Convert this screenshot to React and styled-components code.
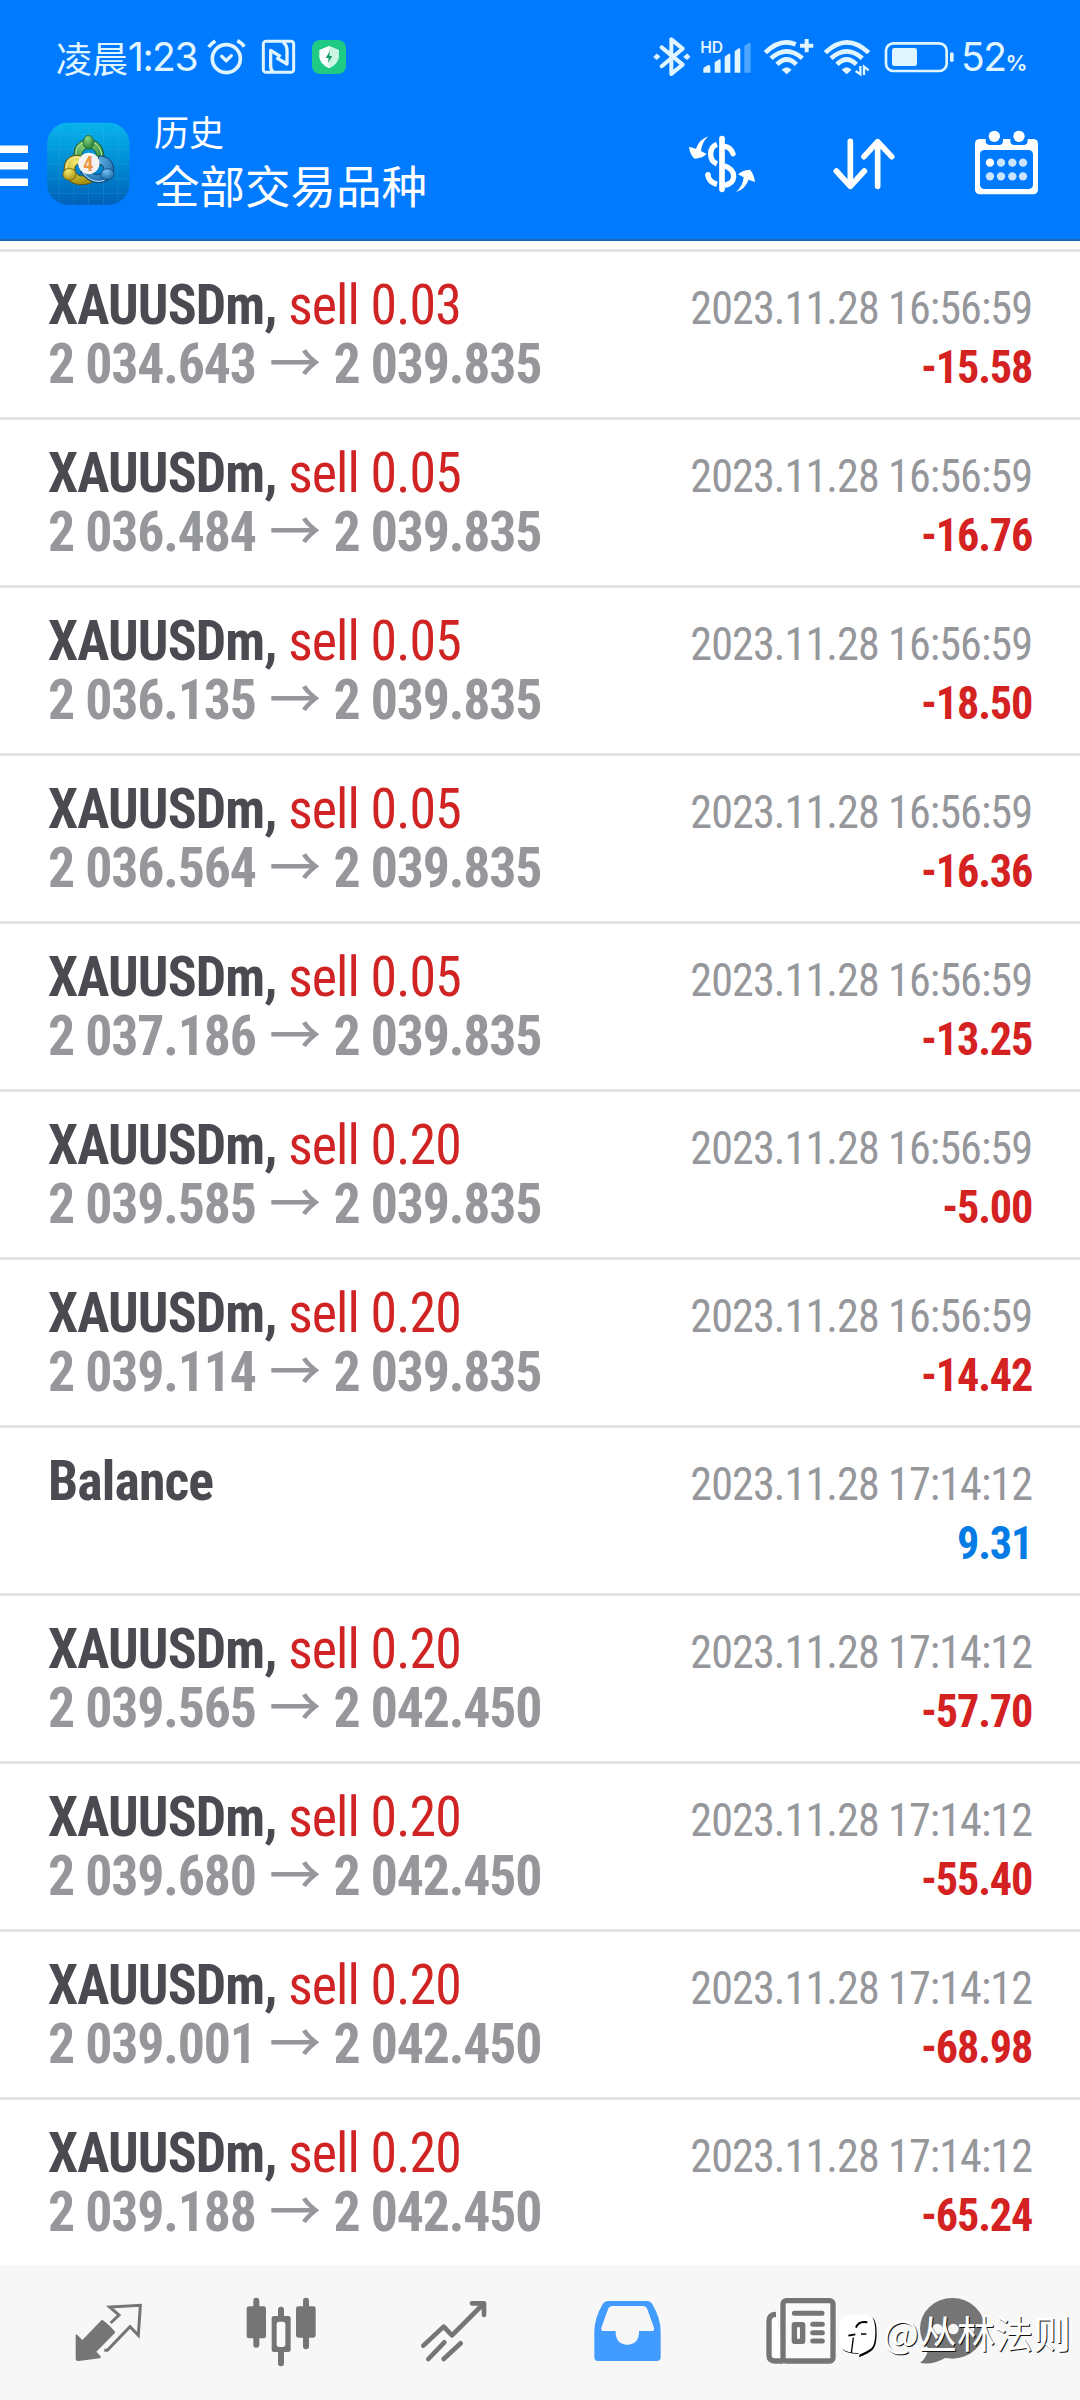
import React from 'react';
import styled, { createGlobalStyle } from 'styled-components';

const GlobalStyle = createGlobalStyle`
  * {
    box-sizing: border-box;
  }
  body {
    margin: 0;
    background: #fff;
    font-family: 'Roboto Condensed', Roboto, 'Noto Sans CJK SC', sans-serif;
  }
`;

const Screen = styled.div`
  position: relative;
  display: flex;
  flex-direction: column;
  width: 1080px;
  height: 2400px;
  overflow: hidden;
`;

const Header = styled.header`
  height: 241px;
  background: #007aff;
  border-bottom: 2px solid #1d67b8;
  color: #fff;
`;

const StatusBar = styled.div`
  display: flex;
  justify-content: space-between;
  height: 110px;
  padding: 4px 52px 0 56px;
  color: #e0f5ff;
`;

const StatusGroup = styled.div`
  display: flex;
  align-items: center;
`;

const Clock = styled.div`
  display: flex;
  align-items: center;
  width: 149px;
  font-family: 'Noto Sans CJK SC', sans-serif;
  font-size: 36px;
  line-height: 40px;
  white-space: nowrap;
`;

const Digits = styled.span`
  font-family: Inter, sans-serif;
  font-size: 39px;
  line-height: 40px;
  letter-spacing: -1.5px;
`;

const Battery = styled.div`
  display: flex;
  align-items: baseline;
  width: 69px;
  padding-left: 2px;
`;

const Percent = styled.span`
  font-family: Inter, sans-serif;
  font-size: 22px;
  font-weight: 600;
`;

const Toolbar = styled.div`
  display: flex;
  align-items: center;
  height: 108px;
  padding-right: 39px;
`;

const Titles = styled.div`
  flex: 1;
  padding: 0 0 6px 23px;
  font-family: 'Noto Sans CJK SC', sans-serif;
`;

const Caption = styled.div`
  font-size: 35px;
  line-height: 46px;
`;

const Title = styled.div`
  font-size: 45.5px;
  line-height: 60px;
`;

const Actions = styled.div`
  display: flex;
  gap: 75px;
`;

const List = styled.main`
  flex: 1;
  padding-top: 8px;
`;

const Row = styled.div`
  display: flex;
  justify-content: space-between;
  align-items: baseline;
  height: 168px;
  padding: 24px 48px 0;
  border-top: 3px solid #e4e4e4;
  line-height: 59px;
  white-space: nowrap;
`;

// the list type is set a little tighter than the condensed face
const Deal = styled.div`
  width: 540px;
  font-size: 56px;
  font-weight: 700;
  letter-spacing: -0.9px;
  color: #4b4a50;
  transform: scaleX(0.96);
  transform-origin: left;
`;

const Side = styled.span`
  font-weight: 400;
  color: #d02424;
`;

const Prices = styled.div`
  letter-spacing: -1.2px;
  color: #96979b;
`;

const Arrow = styled.span`
  font-family: 'Noto Sans CJK SC', sans-serif;
  font-size: 54px;
  font-weight: 500;
  line-height: 0;
  margin: 0 14px;
`;

const Result = styled.div`
  font-size: 46px;
  letter-spacing: -0.95px;
  text-align: right;
  transform: scaleX(0.96);
  transform-origin: right;
`;

const Time = styled.div`
  color: #96979b;
`;

const Profit = styled.div`
  font-weight: 700;
  letter-spacing: -1.2px;
  color: ${(p) => (p.$value < 0 ? '#d42222' : '#057be6')};
`;

const TabBar = styled.nav`
  display: flex;
  align-items: center;
  gap: 103px;
  height: 135px;
  padding-left: 73px;
  background: #f7f7f7;
  color: #757575;
`;

const Tab = styled.div`
  display: flex;
  color: ${(p) => (p.$active ? '#429cff' : 'inherit')};
  margin-left: ${(p) => (p.$tight ? '-23px' : '0')};
`;

const Watermark = styled.div`
  position: absolute;
  right: 9px;
  bottom: 35px;
  display: flex;
  align-items: center;
  font-family: 'Noto Sans CJK SC', sans-serif;
  font-size: 38px;
  color: #fff;
  text-shadow: 1px 1px 0 #111;
`;

const Author = styled.span`
  line-height: 50px;
  padding-bottom: 8px;
`;

const AlarmIcon = () => (
  <svg width="49" height="40" viewBox="495 51 147 120" fill="none" stroke="currentColor" strokeWidth="11" strokeLinecap="round" strokeLinejoin="round">
    <circle cx="559" cy="116" r="42" />
    <path d="M545 109L559 122L574 107" strokeWidth="10" />
    <path d="M506 81Q514 70 526 63M592 62Q604 68 613 80" strokeLinecap="butt" />
  </svg>
);

const NfcIcon = () => (
  <svg width="49" height="40" viewBox="642 51 147 120" fill="none" stroke="currentColor" strokeWidth="9" strokeLinejoin="round">
    <rect x="670" y="64" width="91" height="93" rx="8" />
    <path d="M700 156Q692 150 692 138V91L722 110" strokeWidth="10" />
    <path d="M729 66Q741 76 741 90V132L709 113" strokeWidth="10" />
  </svg>
);

const ShieldIcon = () => (
  <svg width="46" height="40" viewBox="789 51 138 120">
    <rect x="816" y="60" width="102" height="102" rx="24" fill="#1fca85" />
    <path d="M867 78L896 90V112Q894 132 867 145Q840 132 838 112V90Z" fill="#fff" />
    <path d="M867 78L896 90V112Q894 132 867 145Z" fill="#c9f7e4" />
    <path d="M870 93L857 114H866L864 129L877 108H868Z" fill="#159a66" />
  </svg>
);

const BluetoothIcon = () => (
  <svg width="40" height="40" viewBox="36 51 120 120" fill="none" stroke="currentColor" strokeWidth="12" strokeLinecap="round" strokeLinejoin="round">
    <path d="M65 82L128 134L94 162V58L128 86L65 139" />
    <path d="M42 110L50 102L60 110L50 118ZM132 110L142 102L150 110L142 118Z" fill="currentColor" strokeWidth="3" />
  </svg>
);

const HdText = styled.text`
  font-family: Inter, sans-serif;
  font-size: 47px;
  font-weight: 600;
  letter-spacing: -1px;
`;

const SignalIcon = () => (
  <svg width="64" height="40" viewBox="156 51 192 120" fill="currentColor">
    <HdText x="181" y="98">HD</HdText>
    <path d="M190 158V144L204 135Q211 134 211 140V158Z" />
    <path d="M224 158V127L238 118Q242 117 242 122V158Z" />
    <path d="M254 158V110L266 101Q271 99 271 105V158Z" />
    <path d="M284 158V94L296 85Q301 83 301 89V158Z" />
    <path d="M313 158V78L326 69Q332 67 332 73V158Z" opacity="0.35" />
  </svg>
);

const WifiPlusIcon = () => (
  <svg width="62" height="40" viewBox="348 51 186 120" fill="none" stroke="currentColor" strokeWidth="14">
    <path d="M376 98Q420 54 467 73" />
    <path d="M393 115Q440 73 487 115M411 133Q440 104 469 133" />
    <path d="M425 149Q440 134 455 149L440 163Z" fill="currentColor" stroke="none" />
    <path d="M500 57V97M480 77H520" strokeWidth="12" />
  </svg>
);

const WifiIcon = () => (
  <svg width="59" height="40" viewBox="534 51 177 120" fill="none" stroke="currentColor" strokeWidth="14">
    <path d="M556 98Q620 36 686 98M573 115Q620 73 667 115M591 133Q620 104 649 133" />
    <path d="M605 149Q620 134 635 149L620 163Z" fill="currentColor" stroke="none" />
    <path d="M661 138V163L647 153M672 165V140L686 151" strokeWidth="7" />
  </svg>
);

const BatteryIcon = () => (
  <svg width="82" height="40" viewBox="711 51 246 120" fill="currentColor">
    <rect x="738" y="70" width="182" height="83" rx="22" fill="none" stroke="currentColor" strokeWidth="8" />
    <rect x="756" y="84" width="75" height="54" rx="7" />
    <rect x="930" y="97" width="11" height="29" rx="5" />
  </svg>
);

const MenuIcon = () => (
  <svg width="46" height="82" viewBox="0 0 46 82" fill="#fff">
    <path d="M0 22.500H28V30H0ZM0 39H28V46.500H0ZM0 55.500H28V63H0Z" />
  </svg>
);

const LogoDigit = styled.text`
  font-family: 'Open Sans', sans-serif;
  font-size: 62px;
  font-weight: 700;
  font-stretch: 80%;
  fill: #ee9644;
`;

const AppLogo = () => (
  <svg width="85" height="84" viewBox="48 67 252 252">
    <defs>
      <linearGradient id="tile" x1="0" y1="0" x2="0" y2="1">
        <stop offset="0" stopColor="#08b3ec" />
        <stop offset="0.45" stopColor="#0090d6" />
        <stop offset="1" stopColor="#0060b8" />
      </linearGradient>
      <radialGradient id="green" cx="0.4" cy="0.25" r="0.75">
        <stop offset="0" stopColor="#8fd67c" />
        <stop offset="1" stopColor="#1f7f35" />
      </radialGradient>
      <radialGradient id="yellow" cx="0.4" cy="0.25" r="0.75">
        <stop offset="0" stopColor="#f2ea70" />
        <stop offset="1" stopColor="#a8900e" />
      </radialGradient>
      <radialGradient id="blue" cx="0.4" cy="0.25" r="0.75">
        <stop offset="0" stopColor="#74c2f0" />
        <stop offset="1" stopColor="#1667a8" />
      </radialGradient>
    </defs>
    <rect x="50" y="69" width="247" height="246" rx="62" fill="url(#tile)" />
    <path d="M130 69V315M174 69V315M219 69V315M262 75V309M86 75V309M50 104H297M50 149H297M50 193H297M50 237H297M50 281H297" stroke="#5cc8f0" strokeWidth="2" opacity="0.22" />
    <path d="M132 180C124 142 145 120 174 120C207 120 228 148 218 200L196 190C202 162 195 146 175 146C158 146 152 160 154 178Z" fill="url(#green)" stroke="#1c5c30" strokeWidth="3" />
    <path d="M137 174C132 146 148 126 174 126C198 126 215 144 214 180" fill="none" stroke="#c9eeb4" strokeWidth="3" />
    <path d="M150 168C118 162 99 182 101 213C104 246 140 266 186 248L172 226C150 234 136 226 133 211C132 198 140 190 154 191Z" fill="url(#yellow)" stroke="#5e5410" strokeWidth="3" />
    <path d="M148 173C122 169 107 186 107 206" fill="none" stroke="#fbf7b8" strokeWidth="3" />
    <path d="M205 168C238 170 252 192 249 216C242 256 180 264 150 216L172 208C186 226 208 232 219 214C222 202 216 194 202 192Z" fill="url(#blue)" stroke="#0d4575" strokeWidth="3" />
    <path d="M157 218C174 242 200 250 222 242" fill="none" stroke="#c8eaff" strokeWidth="3" />
    <ellipse cx="174" cy="128" rx="16" ry="21" fill="url(#green)" stroke="#1c5c30" strokeWidth="2" />
    <ellipse cx="117" cy="224" rx="20" ry="18" fill="url(#yellow)" stroke="#5e5410" strokeWidth="2" />
    <ellipse cx="231" cy="224" rx="20" ry="17" fill="url(#blue)" stroke="#0d4575" strokeWidth="2" />
    <circle cx="175" cy="191" r="32" fill="#f4f2f2" />
    <LogoDigit x="159" y="213">4</LogoDigit>
  </svg>
);

const CurrencyIcon = () => (
  <svg width="70" height="72" viewBox="141 324 210 216" fill="none" stroke="#fff" strokeWidth="16">
    <path d="M246 356V508" strokeWidth="17" strokeLinecap="round" />
    <path d="M231 373Q212 380 212 402Q212 424 231 432" />
    <path d="M253 379Q271 380 279 401" strokeLinecap="round" />
    <path d="M203 463Q206 486 231 493" />
    <circle cx="204" cy="464" r="8" fill="#fff" stroke="none" />
    <path d="M253 437Q281 446 281 469Q280 491 253 496" />
    <path d="M205 349Q178 358 168 386L147 380Q150 405 164 416Q185 416 200 402L183 393Q185 368 205 349Z" fill="#fff" stroke="none" />
    <path d="M288 516Q315 508 326 479L345 486Q342 462 330 449Q308 450 294 463L311 472Q309 498 288 516Z" fill="#fff" stroke="none" />
  </svg>
);

const SortIcon = () => (
  <svg width="65" height="72" viewBox="579 324 195 216" fill="none" stroke="#fff" strokeWidth="17" strokeLinecap="round" strokeLinejoin="round">
    <path d="M634 364V499M592 453L634 499L676 453" />
    <path d="M716 499V366M675 410L716 365L758 410" />
  </svg>
);

const DOTS = [1050, 1083, 1117, 1149];

const CalendarIcon = () => (
  <svg width="69" height="72" viewBox="996 324 207 216">
    <rect x="1005" y="357" width="189" height="166" rx="14" fill="#fff" />
    <rect x="1020" y="390" width="159" height="117" rx="13" fill="#007aff" />
    <path d="M1037 350V362Q1037 375 1050 375H1076Q1089 375 1089 362V350ZM1111 350V362Q1111 375 1124 375H1150Q1163 375 1163 362V350Z" fill="#007aff" />
    <circle cx="1063" cy="349" r="17" fill="#fff" />
    <circle cx="1137" cy="349" r="17" fill="#fff" />
    {DOTS.map((x, i) => (
      <g key={x} fill="#cbe4ff">
        <circle cx={x} cy="428" r="12.500" fill={i === 0 ? '#fff' : undefined} />
        <circle cx={x} cy="469" r="12.500" />
      </g>
    ))}
  </svg>
);

const QuotesIcon = () => (
  <svg width="70" height="75" viewBox="69 45 210 225" fill="currentColor">
    <path d="M77 165Q78 161 82 165L97 180L152 123Q156 118 161 122Q182 138 194 154Q196 157 194 160L139 215L152 229Q154 234 149 235L86 243Q77 244 77 236Z" />
    <path d="M182 129L207 105L179 81L271 76L265 166L240 140L172 211L163 211" fill="none" stroke="currentColor" strokeWidth="9" />
  </svg>
);

const CandlesIcon = () => (
  <svg width="70" height="75" viewBox="588 45 210 225" fill="currentColor">
    <path d="M619 62V194M693 89V250M768 62V199" stroke="currentColor" strokeWidth="18" strokeLinecap="round" />
    <rect x="590" y="79" width="58" height="96" rx="7" />
    <rect x="738" y="79" width="59" height="94" rx="7" />
    <rect x="665" y="108" width="57" height="108" rx="7" />
    <rect x="680" y="125" width="26" height="76" rx="8" fill="#fafafa" />
  </svg>
);

const TrendIcon = () => (
  <svg width="70" height="75" viewBox="1108 45 210 225" fill="none" stroke="currentColor" strokeWidth="14" strokeLinecap="round" strokeLinejoin="round">
    <path d="M1121 197L1182 140L1207 166L1301 72M1267 70H1303V105" />
    <path d="M1136 237L1184 187M1182 237L1233 190" />
  </svg>
);

const InboxIcon = () => (
  <svg width="70" height="75" viewBox="36 45 210 225" fill="currentColor">
    <path d="M85 63H200Q211 63 217 73Q242 115 242 155V231Q242 243 230 243H55Q43 243 43 231V155Q43 115 68 73Q74 63 85 63Z" />
    <path d="M98 78H188Q198 78 202 88L222 143Q224 153 214 153H177V160Q174 194 142 194Q110 194 107 160V153H72Q62 153 64 143L84 88Q88 78 98 78Z" fill="#f7f7f7" />
  </svg>
);

const NewsIcon = () => (
  <svg width="72" height="75" viewBox="555 45 216 225" fill="none" stroke="currentColor" strokeWidth="16">
    <path d="M588 103Q567 103 567 124V226Q567 243 584 243H610" fill="#fff" />
    <rect x="609" y="62" width="150" height="181" rx="10" fill="#fafafa" />
    <path d="M643 100H726M698 133H727M698 158H727M698 183H727" strokeWidth="15" strokeLinecap="round" />
    <rect x="643" y="134" width="25" height="50" rx="1" />
  </svg>
);

const ChatIcon = () => (
  <svg width="70" height="75" viewBox="1011 45 210 225" fill="currentColor">
    <ellipse cx="1117" cy="145" rx="97" ry="91" />
    <path d="M1046 200Q1042 232 1020 249Q1060 256 1102 230Z" />
    <circle cx="1072" cy="147" r="16" fill="#f7f7f7" />
    <circle cx="1120" cy="147" r="16" fill="#f7f7f7" />
    <circle cx="1167" cy="147" r="16" fill="#f7f7f7" />
  </svg>
);

const NoteMark = () => (
  <svg width="44" height="50" viewBox="783 110 132 150" fill="none">
    <path d="M800 130Q842 118 885 131Q896 140 896 180Q895 216 884 226Q870 238 842 249L846 238Q812 240 796 227Q788 215 788 178Q788 140 800 130Z" fill="#000" />
    <path d="M797 127Q840 114 881 128Q892 136 892 176Q891 212 880 222Q866 233 840 242L842 236Q810 237 793 223Q784 214 784 174Q784 136 797 127Z" fill="#fff" />
    <path d="M868 144Q842 138 834 160" stroke="#000" strokeWidth="6" />
    <path d="M826 190L820 236" stroke="#000" strokeWidth="4" />
    <path d="M811 184L832 180M849 179H865" stroke="#000" strokeWidth="5" />
  </svg>
);

const deals = [
  { lot: '0.03', open: '2 034.643', close: '2 039.835', time: '2023.11.28 16:56:59', profit: '-15.58' },
  { lot: '0.05', open: '2 036.484', close: '2 039.835', time: '2023.11.28 16:56:59', profit: '-16.76' },
  { lot: '0.05', open: '2 036.135', close: '2 039.835', time: '2023.11.28 16:56:59', profit: '-18.50' },
  { lot: '0.05', open: '2 036.564', close: '2 039.835', time: '2023.11.28 16:56:59', profit: '-16.36' },
  { lot: '0.05', open: '2 037.186', close: '2 039.835', time: '2023.11.28 16:56:59', profit: '-13.25' },
  { lot: '0.20', open: '2 039.585', close: '2 039.835', time: '2023.11.28 16:56:59', profit: '-5.00' },
  { lot: '0.20', open: '2 039.114', close: '2 039.835', time: '2023.11.28 16:56:59', profit: '-14.42' },
  { balance: true, time: '2023.11.28 17:14:12', profit: '9.31' },
  { lot: '0.20', open: '2 039.565', close: '2 042.450', time: '2023.11.28 17:14:12', profit: '-57.70' },
  { lot: '0.20', open: '2 039.680', close: '2 042.450', time: '2023.11.28 17:14:12', profit: '-55.40' },
  { lot: '0.20', open: '2 039.001', close: '2 042.450', time: '2023.11.28 17:14:12', profit: '-68.98' },
  { lot: '0.20', open: '2 039.188', close: '2 042.450', time: '2023.11.28 17:14:12', profit: '-65.24' },
];

const DealRow = ({ deal }) => (
  <Row>
    {deal.balance ? (
      <Deal>Balance</Deal>
    ) : (
      <Deal>
        <div>
          XAUUSDm, <Side>sell {deal.lot}</Side>
        </div>
        <Prices>
          {deal.open}
          <Arrow>→</Arrow>
          {deal.close}
        </Prices>
      </Deal>
    )}
    <Result>
      <Time>{deal.time}</Time>
      <Profit $value={Number(deal.profit)}>{deal.profit}</Profit>
    </Result>
  </Row>
);

const App = () => {
  return (
    <Screen>
      <GlobalStyle />
      <Header>
        <StatusBar>
          <StatusGroup>
            <Clock>
              凌晨<Digits>1:23</Digits>
            </Clock>
            <AlarmIcon />
            <NfcIcon />
            <ShieldIcon />
          </StatusGroup>
          <StatusGroup>
            <BluetoothIcon />
            <SignalIcon />
            <WifiPlusIcon />
            <WifiIcon />
            <BatteryIcon />
            <Battery>
              <Digits>52</Digits>
              <Percent>%</Percent>
            </Battery>
          </StatusGroup>
        </StatusBar>
        <Toolbar>
          <MenuIcon />
          <AppLogo />
          <Titles>
            <Caption>历史</Caption>
            <Title>全部交易品种</Title>
          </Titles>
          <Actions>
            <CurrencyIcon />
            <SortIcon />
            <CalendarIcon />
          </Actions>
        </Toolbar>
      </Header>

      <List>
        {deals.map((deal, i) => (
          <DealRow key={i} deal={deal} />
        ))}
      </List>

      <TabBar>
        <Tab><QuotesIcon /></Tab>
        <Tab><CandlesIcon /></Tab>
        <Tab><TrendIcon /></Tab>
        <Tab $active><InboxIcon /></Tab>
        <Tab><NewsIcon /></Tab>
        <Tab $tight><ChatIcon /></Tab>
      </TabBar>

      <Watermark>
        <NoteMark />
        <Author>@丛林法则</Author>
      </Watermark>
    </Screen>
  );
};

export default App;
